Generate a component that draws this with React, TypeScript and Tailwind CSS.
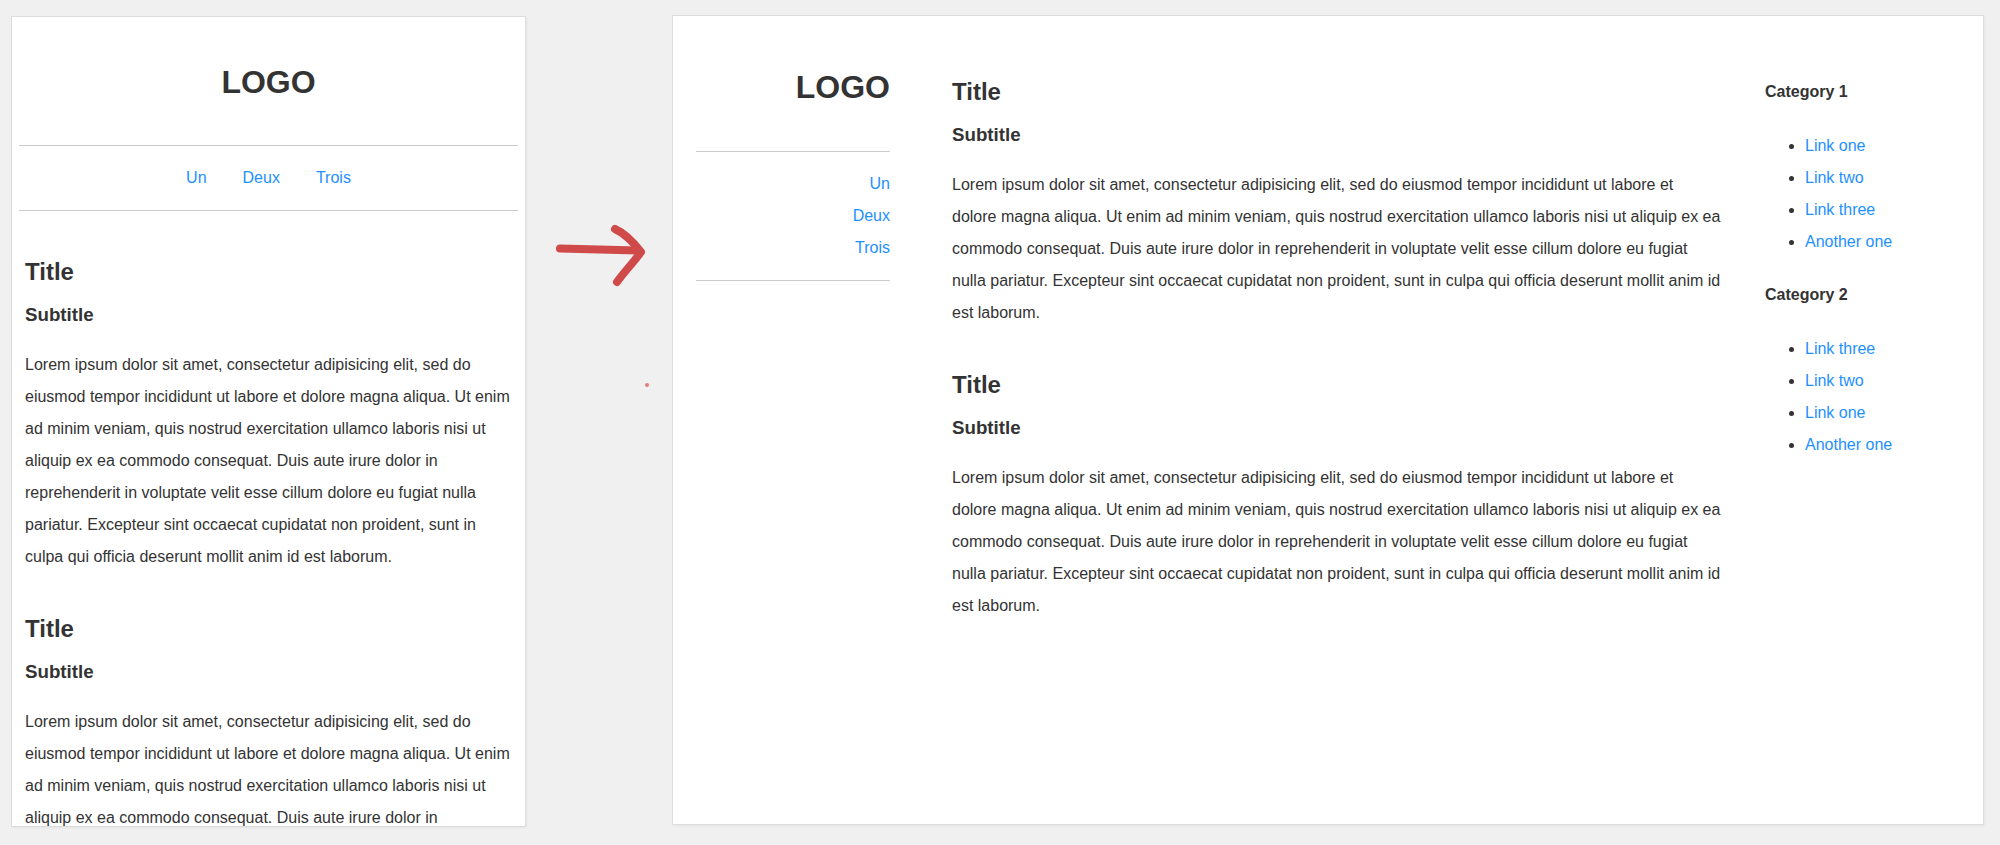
import React from 'react'

const lorem =
  'Lorem ipsum dolor sit amet, consectetur adipisicing elit, sed do eiusmod tempor incididunt ut labore et dolore magna aliqua. Ut enim ad minim veniam, quis nostrud exercitation ullamco laboris nisi ut aliquip ex ea commodo consequat. Duis aute irure dolor in reprehenderit in voluptate velit esse cillum dolore eu fugiat nulla pariatur. Excepteur sint occaecat cupidatat non proident, sunt in culpa qui officia deserunt mollit anim id est laborum.'

const navigation = ['Un', 'Deux', 'Trois']

const categories = [
  { name: 'Category 1', links: ['Link one', 'Link two', 'Link three', 'Another one'] },
  { name: 'Category 2', links: ['Link three', 'Link two', 'Link one', 'Another one'] },
]

const Article = ({ first }: { first?: boolean }) => (
  <section className={first ? '' : 'mt-[40px]'}>
    <h2 className="text-[24px] leading-8 font-bold">Title</h2>
    <h3 className="mt-[13px] text-[18.72px] leading-7 font-bold">Subtitle</h3>
    <p className="mt-[20px] text-base leading-8">{lorem}</p>
  </section>
)

const Arrow = () => (
  <svg width="146" height="400" viewBox="0 0 146 400" className="shrink-0">
    <g fill="none" stroke="#d04a4a" strokeWidth="8" strokeLinecap="round" strokeLinejoin="round">
      <path d="M34 248.5 L112 250.5" />
      <path d="M89 229 C98 233 108 243 115 252 C108 262 98 272 91 282" />
    </g>
    <circle cx="121" cy="385" r="2" fill="#e06060" opacity="0.8" />
  </svg>
)

export default function App() {
  return (
    <div className="flex min-h-[845px] w-[2000px] items-start bg-[#f0f0f0] font-['Liberation_Sans',Arial,sans-serif] text-[#333]">
      {/* mobile layout */}
      <div className="ml-[11px] mt-[16px] h-[811px] w-[515px] shrink-0 overflow-hidden border border-[#ddd] bg-white shadow-[1px_1px_2px_rgba(0,0,0,0.05)]">
        <header className="pt-[45px]">
          <h1 className="text-center text-[32px] leading-10 font-bold">LOGO</h1>
          <nav className="mx-[7px] mt-[43px] flex justify-center gap-[36px] border-y border-[#ccc] py-4">
            {navigation.map((item) => (
              <a key={item} href="#" className="text-base leading-8 text-[#1e90ff]">
                {item}
              </a>
            ))}
          </nav>
        </header>
        <main className="mt-[45px] px-[13px]">
          <Article first />
          <Article />
        </main>
      </div>

      <Arrow />

      {/* desktop layout */}
      <div className="mt-[15px] flex h-[810px] w-[1312px] shrink-0 items-start border border-[#ddd] bg-white pt-[60px] shadow-[1px_1px_2px_rgba(0,0,0,0.05)]">
        <header className="ml-[23px] w-[194px] shrink-0 text-right">
          <h1 className="-mt-px text-[32px] leading-6 font-bold">LOGO</h1>
          <nav className="mt-[52px] flex flex-col items-end border-y border-[#ccc] py-4">
            {navigation.map((item) => (
              <a key={item} href="#" className="text-base leading-8 text-[#1e90ff]">
                {item}
              </a>
            ))}
          </nav>
        </header>
        <main className="ml-[62px] w-[769px] shrink-0">
          <Article first />
          <Article />
        </main>
        <aside className="ml-[44px]">
          {categories.map((cat, i) => (
            <div key={cat.name} className={i > 0 ? 'mt-[21px]' : ''}>
              <h4 className="text-base leading-8 font-bold">{cat.name}</h4>
              <ul className="mt-[22px] list-disc pl-10">
                {cat.links.map((link) => (
                  <li key={link} className="text-base leading-8">
                    <a href="#" className="text-[#1e90ff]">
                      {link}
                    </a>
                  </li>
                ))}
              </ul>
            </div>
          ))}
        </aside>
      </div>
    </div>
  )
}
